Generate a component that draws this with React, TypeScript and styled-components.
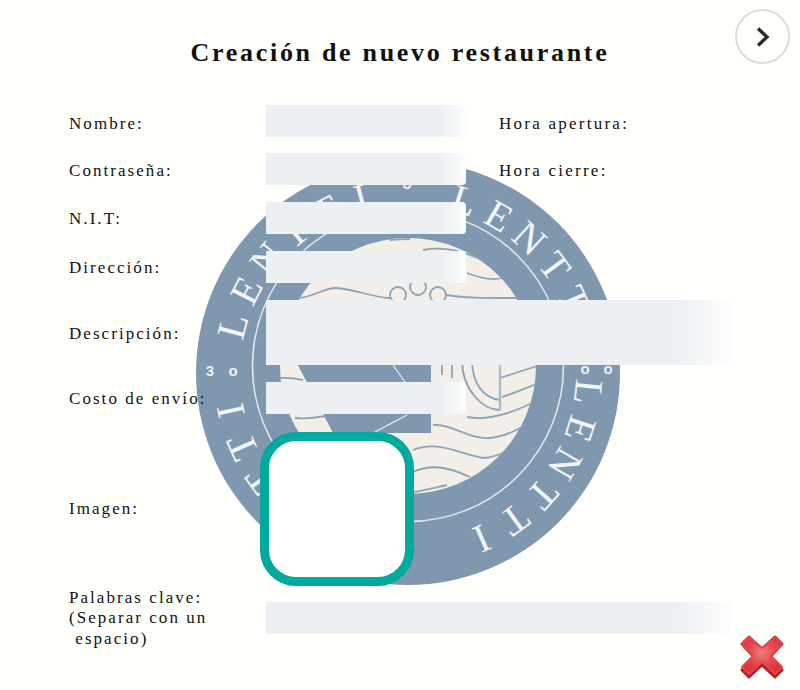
import React from "react";
import styled, { createGlobalStyle } from "styled-components";

const GlobalStyle = createGlobalStyle`
  html, body {
    margin: 0;
    padding: 0;
    background: #fffffc;
  }
`;

const Page = styled.div`
  position: relative;
  width: 800px;
  height: 690px;
  overflow: hidden;
  background: #fffffc;
  font-family: "Liberation Serif", "Times New Roman", serif;
  color: #111;
`;

const Logo = styled.svg`
  position: absolute;
  left: 196px;
  top: 160px;
  width: 424px;
  height: 426px;
`;

const Content = styled.div`
  position: relative;
  padding: 0 69px;
`;

const Title = styled.h1`
  margin: 0;
  height: 104.6px;
  padding-top: 37px;
  box-sizing: border-box;
  font-size: 26px;
  line-height: 32px;
  font-weight: 700;
  letter-spacing: 2.7px;
  text-align: center;
`;

const Form = styled.form`
  display: flex;
  flex-direction: column;
  gap: 16.8px;
`;

const Row = styled.div`
  display: flex;
  align-items: center;
  height: ${(p) => (p.$fixed ? "32px" : "auto")};
`;

const Label = styled.label`
  flex: 0 0 197px;
  padding-top: ${(p) => p.$pad ?? 3}px;
  font-size: 17px;
  line-height: 20.5px;
  letter-spacing: 2.05px;
  white-space: pre-wrap;
`;

const HourLabel = styled(Label)`
  flex: 0 0 auto;
  margin-left: 33px;
  letter-spacing: 2.25px;
`;

const Field = styled.input`
  display: block;
  box-sizing: border-box;
  width: ${(p) => (p.$wide ? 465 : 200)}px;
  height: ${(p) => (p.$tall ? 65 : 32)}px;
  padding: 0 8px;
  border: 0;
  outline: 0;
  border-radius: 0 4px 4px 0;
  background: linear-gradient(90deg, #ecf0f3 88%, #fcfdfd 100%);
`;

const ImagePicker = styled.div`
  box-sizing: border-box;
  width: 154px;
  height: 154px;
  margin: 1.2px 0 0 -6px;
  border: 9.5px solid #02a99d;
  border-radius: 36px;
  background: #fff;
`;

const NextButton = styled.button`
  position: absolute;
  top: 9px;
  left: 735px;
  display: flex;
  align-items: center;
  justify-content: center;
  width: 55px;
  height: 55px;
  padding: 0;
  border: 2px solid #dcdce0;
  border-radius: 50%;
  background: #fffffc;
`;

const CloseButton = styled.button`
  position: absolute;
  left: 740px;
  top: 635px;
  width: 44px;
  height: 44px;
  padding: 0;
  border: 0;
  background: none;
`;

const CX = 408;
const CY = 373;
const WORD = "LENTTI";
const SEGMENTS = [18, 96, 198, 285];

function RingLetters() {
  const letters: React.ReactNode[] = [];
  SEGMENTS.forEach((start) => {
    WORD.split("").forEach((ch, i) => {
      const angle = start + i * 12;
      letters.push(
        <text
          key={`${start}-${i}`}
          x={CX}
          y={CY - 168}
          textAnchor="middle"
          fontSize="40"
          fontFamily="'Liberation Serif', serif"
          fill="#f2f4f6"
          transform={`rotate(${angle} ${CX} ${CY})`}
        >
          {ch}
        </text>
      );
    });
  });
  return <>{letters}</>;
}

function LogoArt() {
  const wave = { fill: "none", stroke: "#8ba4ba", strokeWidth: 1.8 };
  return (
    <Logo viewBox="196 160 424 426" aria-hidden="true">
      <defs>
        <clipPath id="creamClip">
          <circle cx="408" cy="366" r="128" />
        </clipPath>
      </defs>
      <circle cx={CX} cy={CY} r="212" fill="#7f98b0" />
      <circle cx="408" cy="366" r="155.5" fill="none" stroke="#e4e9ee" strokeWidth="1.5" />
      <circle cx="408" cy="366" r="128" fill="#f3eee8" />
      <g clipPath="url(#creamClip)">
        <g {...wave}>
          <path d="M300 298C315 296 325 288 335 288C350 288 375 298 390 298" />
          <circle cx="398" cy="295" r="8" />
          <circle cx="418" cy="287" r="8" />
          <circle cx="438" cy="295" r="8" />
          <path d="M447 295C465 298 480 298 520 298" />
          <path d="M390 240C400 239 405 239 410 239" />
          <path d="M423 250C440 247 460 250 477 258" />
          <path d="M467 273C485 280 495 280 502 278" />
          <path d="M500 378C512 374 525 370 537 366" />
          <path d="M502 397C515 393 525 388 537 384" />
          <path d="M467 417C483 420 503 417 530 404" />
          <path d="M433 425C450 423 470 440 490 438C503 437 513 432 522 427" />
          <path d="M413 450C437 440 457 453 483 458C493 458 503 453 512 449" />
          <path d="M413 472C433 463 450 468 470 477" />
          <path d="M413 492C427 490 437 487 447 485" />
          <path d="M472 360C472 383 483 398 500 400" />
          <path d="M462 360C462 390 483 410 500 410" />
          <path d="M452 360V378" />
          <path d="M442 360V375" />
          <path d="M280 378C290 377 296 379 303 380" />
          <path d="M295 418C305 419 315 418 325 416" />
        </g>
        <path d="M500 360V410" stroke="#a9bccb" strokeWidth="2.5" fill="none" />
      </g>
      <polygon points="285,340 431,340 431,433 333,433" fill="#7f98b0" />
      <path d="M393 365L405 382" stroke="#f3eee8" strokeWidth="1.2" />
      <path d="M373 433L407 415" stroke="#f3eee8" strokeWidth="1.2" />
      <RingLetters />
      <g fontFamily="'Liberation Sans', sans-serif" fontSize="15" fontWeight="700" fill="#eef1f4" textAnchor="middle">
        <text x="210" y="376">3</text>
        <text x="233" y="376">o</text>
        <text x="407" y="189">o</text>
        <text x="585" y="374">o</text>
        <text x="608" y="374">o</text>
      </g>
    </Logo>
  );
}

function CloseIcon() {
  return (
    <svg viewBox="0 0 44 44" width="44" height="44" aria-hidden="true">
      <defs>
        <radialGradient id="redFill" cx="50%" cy="42%" r="55%">
          <stop offset="0%" stopColor="#ef7f80" />
          <stop offset="60%" stopColor="#e5484d" />
          <stop offset="100%" stopColor="#d9343a" />
        </radialGradient>
      </defs>
      <polygon
        points="9,2 22,14 35,2 42,9 30,22 42,35 35,42 22,30 9,42 2,35 14,22 2,9"
        fill="#b5212a"
        stroke="#b5212a"
        strokeWidth="3"
        strokeLinejoin="round"
      />
      <polygon
        points="9,2 22,13 35,2 42,9 31,21 42,32 35,39 22,27 9,39 2,32 13,21 2,9"
        fill="url(#redFill)"
        stroke="#e2454a"
        strokeWidth="2"
        strokeLinejoin="round"
      />
    </svg>
  );
}

export default function App() {
  return (
    <Page>
      <GlobalStyle />
      <LogoArt />
      <Content>
        <Title>Creación de nuevo restaurante</Title>
        <Form>
          <Row>
            <Label $pad={7}>Nombre:</Label>
            <Field type="text" />
            <HourLabel $pad={7}>Hora apertura:</HourLabel>
          </Row>
          <Row>
            <Label>Contraseña:</Label>
            <Field type="password" />
            <HourLabel>Hora cierre:</HourLabel>
          </Row>
          <Row>
            <Label>N.I.T:</Label>
            <Field type="text" />
          </Row>
          <Row>
            <Label>Dirección:</Label>
            <Field type="text" />
          </Row>
          <Row>
            <Label>Descripción:</Label>
            <Field type="text" $wide $tall />
          </Row>
          <Row>
            <Label>Costo de envío:</Label>
            <Field type="text" />
          </Row>
          <Row>
            <Label>Imagen:</Label>
            <ImagePicker />
          </Row>
          <Row $fixed>
            <Label $pad={0}>{"Palabras clave:\n(Separar con un\n espacio)"}</Label>
            <Field type="text" $wide />
          </Row>
        </Form>
      </Content>
      <NextButton type="button" aria-label="Siguiente">
        <svg width="18" height="22" viewBox="0 0 18 22" aria-hidden="true">
          <path d="M4 2.5L13 11L4 19.5" fill="none" stroke="#2b2b2b" strokeWidth="3.4" />
        </svg>
      </NextButton>
      <CloseButton type="button" aria-label="Cerrar">
        <CloseIcon />
      </CloseButton>
    </Page>
  );
}
